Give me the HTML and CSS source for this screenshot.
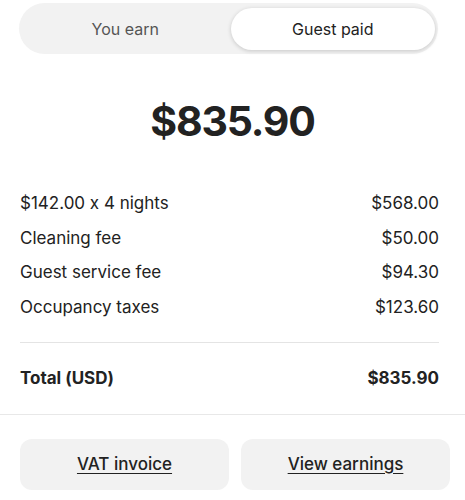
FILE: index.html
```html
<!DOCTYPE html>
<html lang="en">
<head>
    <meta charset="UTF-8">
    <meta name="viewport" content="width=device-width, initial-scale=1.0">
    <title>Payout details</title>

    <link rel="stylesheet" href="styles.css">
</head>
<body>
    <div class="toggle">
        <div class="tab">You earn</div>
        <div class="tab active">Guest paid</div>
    </div>

    <h1 class="amount">$835.90</h1>

    <div class="lines">
        <div class="line">
            <span>$142.00 x 4 nights</span>
            <span>$568.00</span>
        </div>
        <div class="line">
            <span>Cleaning fee</span>
            <span>$50.00</span>
        </div>
        <div class="line">
            <span>Guest service fee</span>
            <span>$94.30</span>
        </div>
        <div class="line">
            <span>Occupancy taxes</span>
            <span>$123.60</span>
        </div>
    </div>

    <div class="total">
        <span>Total (USD)</span>
        <span>$835.90</span>
    </div>

    <div class="actions">
        <a class="btn" href="#">VAT invoice</a>
        <a class="btn" href="#">View earnings</a>
    </div>
</body>
</html>
```

FILE: styles.css
```css
* {
    margin: 0px;
    padding: 0px;
    box-sizing: border-box;
}

body {
    font-family: Inter, "Noto Sans", sans-serif;
    font-feature-settings: "calt" 0;
    color: #222222;
    background-color: white;
}

.toggle {
    display: grid;
    grid-template-columns: 1fr 1fr;
    margin: 3px 27px 0 19px;
    height: 51px;
    padding: 5px 3px 4px 3px;
    background-color: #f2f2f2;
    border-radius: 26px;
}

.tab {
    display: flex;
    justify-content: center;
    align-items: center;
    font-size: 16px;
    color: #555555;
    border-radius: 21px;
}

.tab.active {
    margin-left: 2px;
    background-color: white;
    color: #222222;
    box-shadow: 0 1px 4px rgba(0, 0, 0, 0.18);
}

.amount {
    margin-top: 37px;
    text-align: center;
    font-size: 41px;
    font-weight: 700;
    letter-spacing: -1.2px;
    line-height: 60px;
}

.lines {
    margin: 35px 26px 0 20px;
    padding-bottom: 18px;
    border-bottom: 1px solid #e4e4e4;
}

.line,
.total {
    display: flex;
    justify-content: space-between;
    font-size: 17px;
    line-height: 34.5px;
}

.total {
    padding: 18px 26px 18px 20px;
    font-weight: 700;
    border-bottom: 1px solid #e8e8e8;
}

.actions {
    display: flex;
    gap: 12px;
    padding: 24px 15px 0 20px;
}

.btn {
    flex: 1;
    height: 51px;
    display: flex;
    justify-content: center;
    align-items: center;
    background-color: #f2f2f2;
    border-radius: 12px;
    color: #222222;
    font-size: 17px;
    font-weight: 500;
    text-decoration: underline;
    text-underline-offset: 3px;
}
```
